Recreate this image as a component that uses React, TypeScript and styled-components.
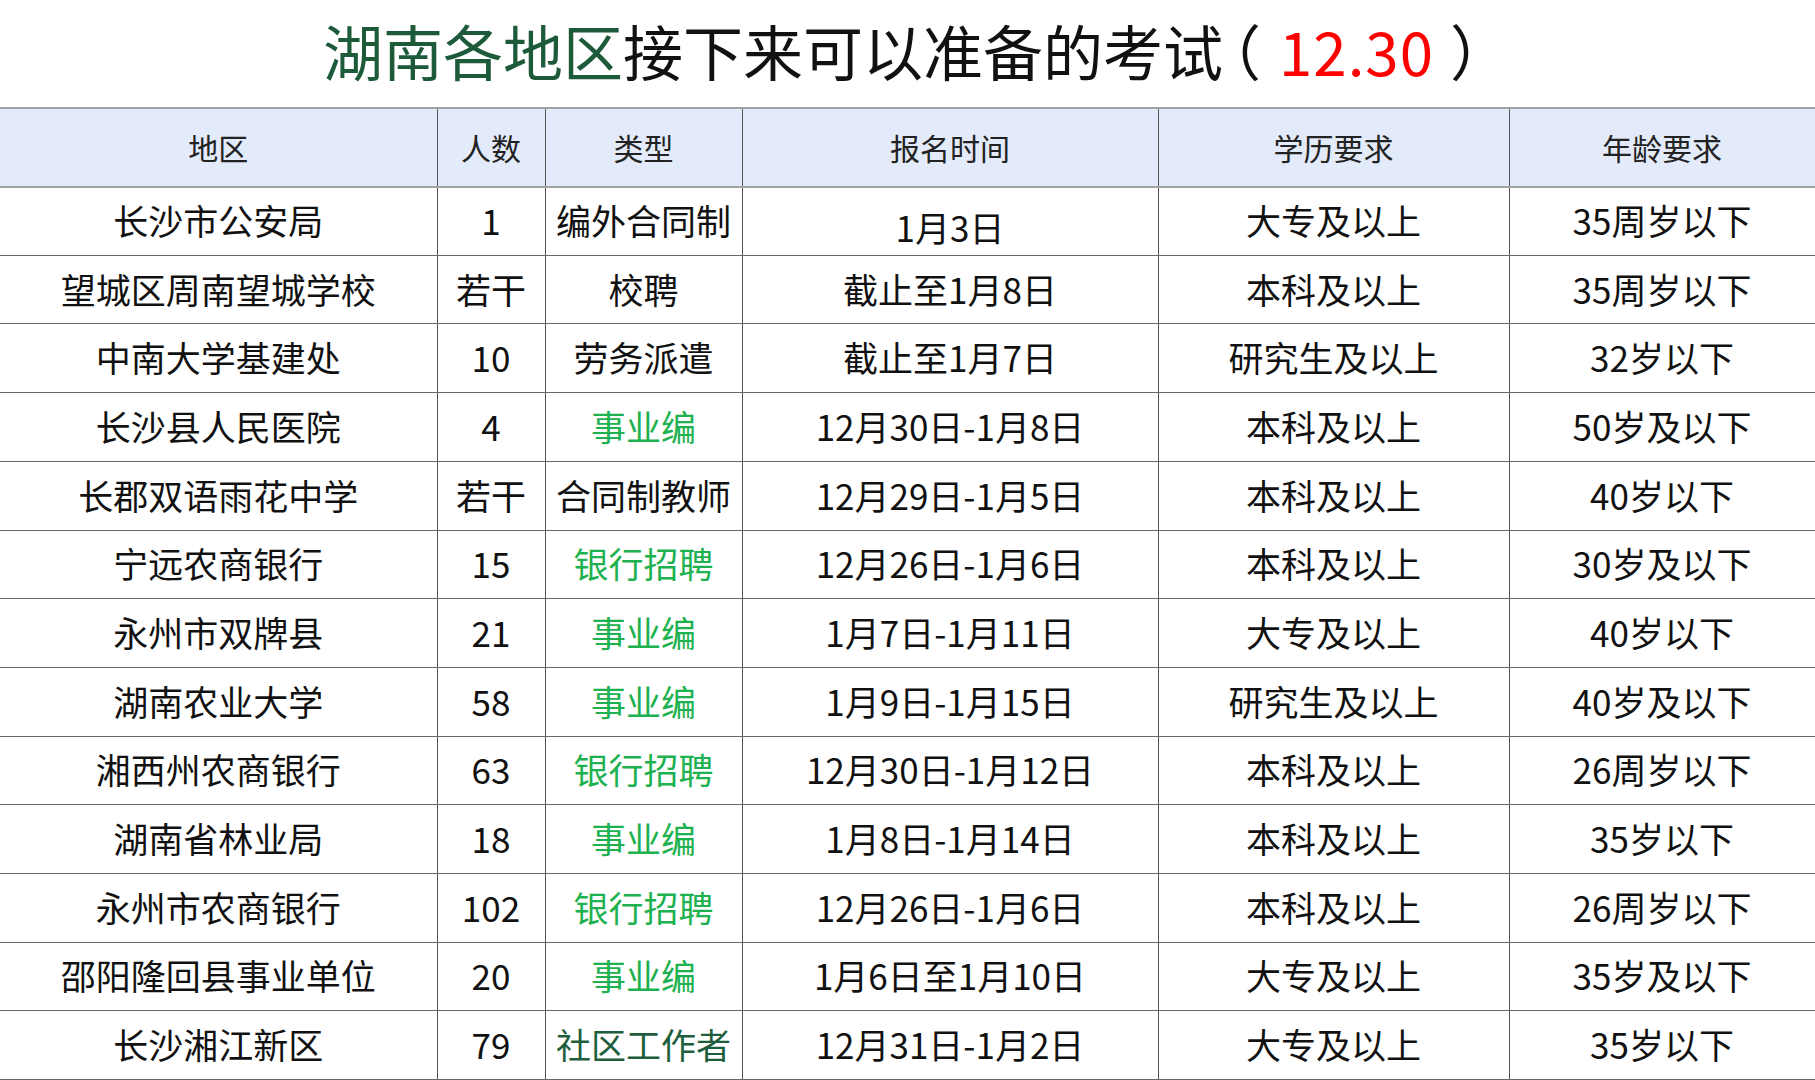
import styled, { createGlobalStyle } from "styled-components";

const GlobalStyle = createGlobalStyle`
  html, body {
    margin: 0;
    padding: 0;
    background: #ffffff;
  }
  body {
    font-family: "Noto Sans CJK SC", "Noto Sans", sans-serif;
    color: #111;
  }
`;

const Page = styled.div`
  width: 1815px;
  height: 1080px;
  overflow: hidden;
  display: flex;
  flex-direction: column;
`;

const Title = styled.h1`
  height: 110px;
  margin: 0;
  display: flex;
  align-items: center;
  justify-content: center;
  padding: 0 0 8px 18px;
  box-sizing: border-box;
  font-size: 60px;
  font-weight: 400;
  color: #111;
  .title-region {
    color: #1d5a3a;
  }
  .title-paren {
    font-feature-settings: "halt" 1;
    margin-left: 8px;
  }
  .title-date {
    color: #ff0000;
    margin: 0 16px 0 18px;
    letter-spacing: 1px;
  }
`;

const Table = styled.table`
  width: 1815px;
  border-collapse: collapse;
  table-layout: fixed;
`;

const HeadCell = styled.th`
  height: 77px;
  padding: 0;
  background-color: #e3ebfa;
  border-top: 2px solid #a3a3a3;
  border-bottom: 2px solid #a3a3a3;
  border-right: 1px solid #555;
  font-size: 30px;
  font-weight: 400;
  color: #222;
  text-align: center;
  &:last-child {
    border-right: 1px solid #888;
  }
`;

const Cell = styled.td<{ $tone?: "light" | "dark"; $drop?: boolean }>`
  height: 68.7px;
  padding: ${(p) => (p.$drop ? "10px 0 0" : "0 0 3px")};
  box-sizing: border-box;
  border-bottom: 1px solid #666;
  border-right: 1px solid #555;
  font-size: 35px;
  text-align: center;
  white-space: nowrap;
  color: ${(p) =>
    p.$tone === "light" ? "#1db14f" : p.$tone === "dark" ? "#1e5e3c" : "#111"};
  &:last-child {
    border-right: 1px solid #888;
  }
`;

type Row = {
  region: string;
  count: string;
  kind: string;
  tone?: "light" | "dark";
  time: string;
  edu: string;
  age: string;
};

const rows: Row[] = [
  { region: "长沙市公安局", count: "1", kind: "编外合同制", time: "1月3日", edu: "大专及以上", age: "35周岁以下" },
  { region: "望城区周南望城学校", count: "若干", kind: "校聘", time: "截止至1月8日", edu: "本科及以上", age: "35周岁以下" },
  { region: "中南大学基建处", count: "10", kind: "劳务派遣", time: "截止至1月7日", edu: "研究生及以上", age: "32岁以下" },
  { region: "长沙县人民医院", count: "4", kind: "事业编", tone: "light", time: "12月30日-1月8日", edu: "本科及以上", age: "50岁及以下" },
  { region: "长郡双语雨花中学", count: "若干", kind: "合同制教师", time: "12月29日-1月5日", edu: "本科及以上", age: "40岁以下" },
  { region: "宁远农商银行", count: "15", kind: "银行招聘", tone: "light", time: "12月26日-1月6日", edu: "本科及以上", age: "30岁及以下" },
  { region: "永州市双牌县", count: "21", kind: "事业编", tone: "light", time: "1月7日-1月11日", edu: "大专及以上", age: "40岁以下" },
  { region: "湖南农业大学", count: "58", kind: "事业编", tone: "light", time: "1月9日-1月15日", edu: "研究生及以上", age: "40岁及以下" },
  { region: "湘西州农商银行", count: "63", kind: "银行招聘", tone: "light", time: "12月30日-1月12日", edu: "本科及以上", age: "26周岁以下" },
  { region: "湖南省林业局", count: "18", kind: "事业编", tone: "light", time: "1月8日-1月14日", edu: "本科及以上", age: "35岁以下" },
  { region: "永州市农商银行", count: "102", kind: "银行招聘", tone: "light", time: "12月26日-1月6日", edu: "本科及以上", age: "26周岁以下" },
  { region: "邵阳隆回县事业单位", count: "20", kind: "事业编", tone: "light", time: "1月6日至1月10日", edu: "大专及以上", age: "35岁及以下" },
  { region: "长沙湘江新区", count: "79", kind: "社区工作者", tone: "dark", time: "12月31日-1月2日", edu: "大专及以上", age: "35岁以下" },
];

const columns = [
  { label: "地区", width: 437 },
  { label: "人数", width: 108 },
  { label: "类型", width: 197 },
  { label: "报名时间", width: 416 },
  { label: "学历要求", width: 351 },
  { label: "年龄要求", width: 306 },
];

export default function App() {
  return (
    <Page>
      <GlobalStyle />
      <Title>
        <span className="title-region">湖南各地区</span>
        接下来可以准备的考试
        <span className="title-paren">（</span>
        <span className="title-date">12.30</span>）
      </Title>
      <Table>
        <colgroup>
          {columns.map((c) => (
            <col key={c.label} style={{ width: c.width }} />
          ))}
        </colgroup>
        <thead>
          <tr>
            {columns.map((c) => (
              <HeadCell key={c.label}>{c.label}</HeadCell>
            ))}
          </tr>
        </thead>
        <tbody>
          {rows.map((r, i) => (
            <tr key={r.region}>
              <Cell>{r.region}</Cell>
              <Cell>{r.count}</Cell>
              <Cell $tone={r.tone}>{r.kind}</Cell>
              <Cell $drop={i === 0}>{r.time}</Cell>
              <Cell>{r.edu}</Cell>
              <Cell>{r.age}</Cell>
            </tr>
          ))}
        </tbody>
      </Table>
    </Page>
  );
}
